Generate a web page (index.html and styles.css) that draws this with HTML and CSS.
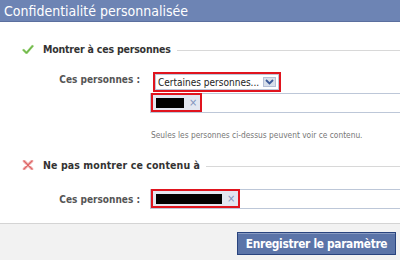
FILE: index.html
```html
<!DOCTYPE html>
<html lang="fr">
<head>
<meta charset="utf-8">
<title>Confidentialité personnalisée</title>
<link rel="stylesheet" href="styles.css">
</head>
<body>
<div class="dialog">
  <div class="header"><h1 class="title">Confidentialité personnalisée</h1></div>
  <div class="content">
    <div class="sec-title">
      <svg class="icon" width="12" height="10" viewBox="0 0 12 10"><path d="M1 5.5 L4.5 9 L11 1.5" fill="none" stroke="#8fcc6a" stroke-width="2.4" stroke-linejoin="round"/><path d="M1 5.5 L4.5 9 L11 1.5" fill="none" stroke="#5aa836" stroke-width="0.8"/></svg>
      <span class="sec-text">Montrer à ces personnes</span>
      <span class="rule"></span>
    </div>
    <div class="field field-show">
      <span class="label">Ces personnes :</span>
      <div class="controls">
        <div class="hl select-hl">
          <div class="select">
            <span class="select-text">Certaines personnes...</span>
            <span class="arrow"><svg width="9" height="6" viewBox="0 0 9 6"><path d="M1 1 L4.5 4.5 L8 1" fill="none" stroke="#3b5998" stroke-width="1.8"/></svg></span>
          </div>
        </div>
        <div class="tokens">
          <span class="hl token"><span class="redact r1"></span><span class="x">×</span></span>
        </div>
      </div>
    </div>
    <p class="hint">Seules les personnes ci-dessus peuvent voir ce contenu.</p>

    <div class="sec-title sec-hide">
      <svg class="icon" width="12" height="10" viewBox="0 0 12 10"><path d="M2 1 L10 9 M10 1 L2 9" fill="none" stroke="#eb9a9a" stroke-width="2.6" stroke-linecap="round"/><path d="M2 1 L10 9 M10 1 L2 9" fill="none" stroke="#d95a5a" stroke-width="0.8"/></svg>
      <span class="sec-text">Ne pas montrer ce contenu à</span>
      <span class="rule"></span>
    </div>
    <div class="field field-hide">
      <span class="label">Ces personnes :</span>
      <div class="controls">
        <div class="tokens">
          <span class="hl token"><span class="redact r2"></span><span class="x">×</span></span>
        </div>
      </div>
    </div>
  </div>
  <div class="footer">
    <button class="btn">Enregistrer le paramètre</button>
  </div>
</div>
</body>
</html>
```
FILE: styles.css
```css
* { box-sizing: border-box; }
html, body { margin: 0; padding: 0; }
body {
  width: 400px;
  height: 260px;
  overflow: hidden;
  background: #fff;
  font-family: "DejaVu Sans Condensed", "DejaVu Sans", sans-serif;
  font-size: 10px;
  color: #333;
}
.dialog {
  display: flex;
  flex-direction: column;
  height: 260px;
}
.header {
  height: 22px;
  background: #6d84b4;
  border-bottom: 1px solid #5b6f9e;
  display: flex;
  align-items: center;
  padding-left: 4px;
}
.title {
  margin: 0;
  font-size: 14px;
  font-weight: normal;
  color: #fff;
  line-height: 20px;
  white-space: nowrap;
}
.content {
  display: flex;
  flex-direction: column;
  padding-top: 20px;
}
.sec-title {
  display: flex;
  align-items: center;
  height: 14px;
  padding-left: 22px;
}
.icon { flex: none; margin-right: 9px; }
.sec-text {
  font-weight: bold;
  font-size: 10.5px;
  letter-spacing: -0.2px;
  color: #333;
  white-space: nowrap;
}
.sec-hide .sec-text { letter-spacing: 0.1px; }
.rule {
  flex: 1;
  height: 1px;
  background: #d8d8d8;
  margin-left: 6px;
  margin-top: 2px;
}
.field {
  display: flex;
  align-items: flex-start;
}
.field-show { margin-top: 16px; }
.field-hide { margin-top: 17px; }
.label {
  width: 140px;
  text-align: right;
  font-weight: bold;
  font-size: 10px;
  color: #555;
  margin-right: 10px;
  flex: none;
  white-space: nowrap;
}
.field-show .label { line-height: 16px; }
.field-hide .label { line-height: 22px; }
.controls {
  flex: 1;
  display: flex;
  flex-direction: column;
  margin-right: -10px;
}
.hl { border: 2px solid #e0141e; }
.select-hl {
  width: 128px;
  height: 20px;
  margin-left: 3px;
}
.select {
  height: 16px;
  border: 1px solid #bdc7d8;
  background: #fff;
  display: flex;
  align-items: center;
  justify-content: space-between;
  padding: 0 2px 0 2px;
}
.select-text { color: #222; white-space: nowrap; font-size: 10px; }
.arrow {
  width: 13px;
  height: 10px;
  background: #d8dfea;
  border: 1px solid #b4bfd6;
  display: flex;
  align-items: center;
  justify-content: center;
}
.tokens {
  margin-top: 1px;
  height: 20px;
  border: 1px solid #bdc7d8;
  border-right: none;
  display: flex;
  align-items: stretch;
}
.field-hide .tokens { margin-top: 0; }
.token {
  display: flex;
  align-items: center;
  background: #e2e6f0;
  padding: 0 3px;
  height: 19px;
  margin-top: -1px;
}
.redact {
  display: block;
  height: 10px;
  background: #000;
}
.r1 { width: 28px; }
.r2 { width: 66px; }
.x {
  color: #7f93bc;
  font-size: 11px;
  margin-left: 5px;
  line-height: 10px;
}
.hint {
  margin: 15px 0 0 151px;
  line-height: 14px;
  font-size: 8.3px;
  color: #777;
  white-space: nowrap;
}
.sec-hide { margin-top: 16px; }
.footer {
  margin-top: auto;
  height: 37px;
  background: #f2f2f2;
  border-top: 1px solid #d4d4d4;
  display: flex;
  justify-content: flex-end;
  align-items: flex-start;
  padding: 8px 4px 0 0;
}
.btn {
  font-family: "DejaVu Sans Condensed", "DejaVu Sans", sans-serif;
  font-size: 11.8px;
  letter-spacing: -0.3px;
  font-weight: bold;
  color: #fff;
  background: #5b74a8;
  border: 1px solid #29447e;
  box-shadow: inset 0 1px 0 #8a9cc2;
  height: 23px;
  width: 159px;
  padding: 0;
  line-height: 20px;
  white-space: nowrap;
}
```
